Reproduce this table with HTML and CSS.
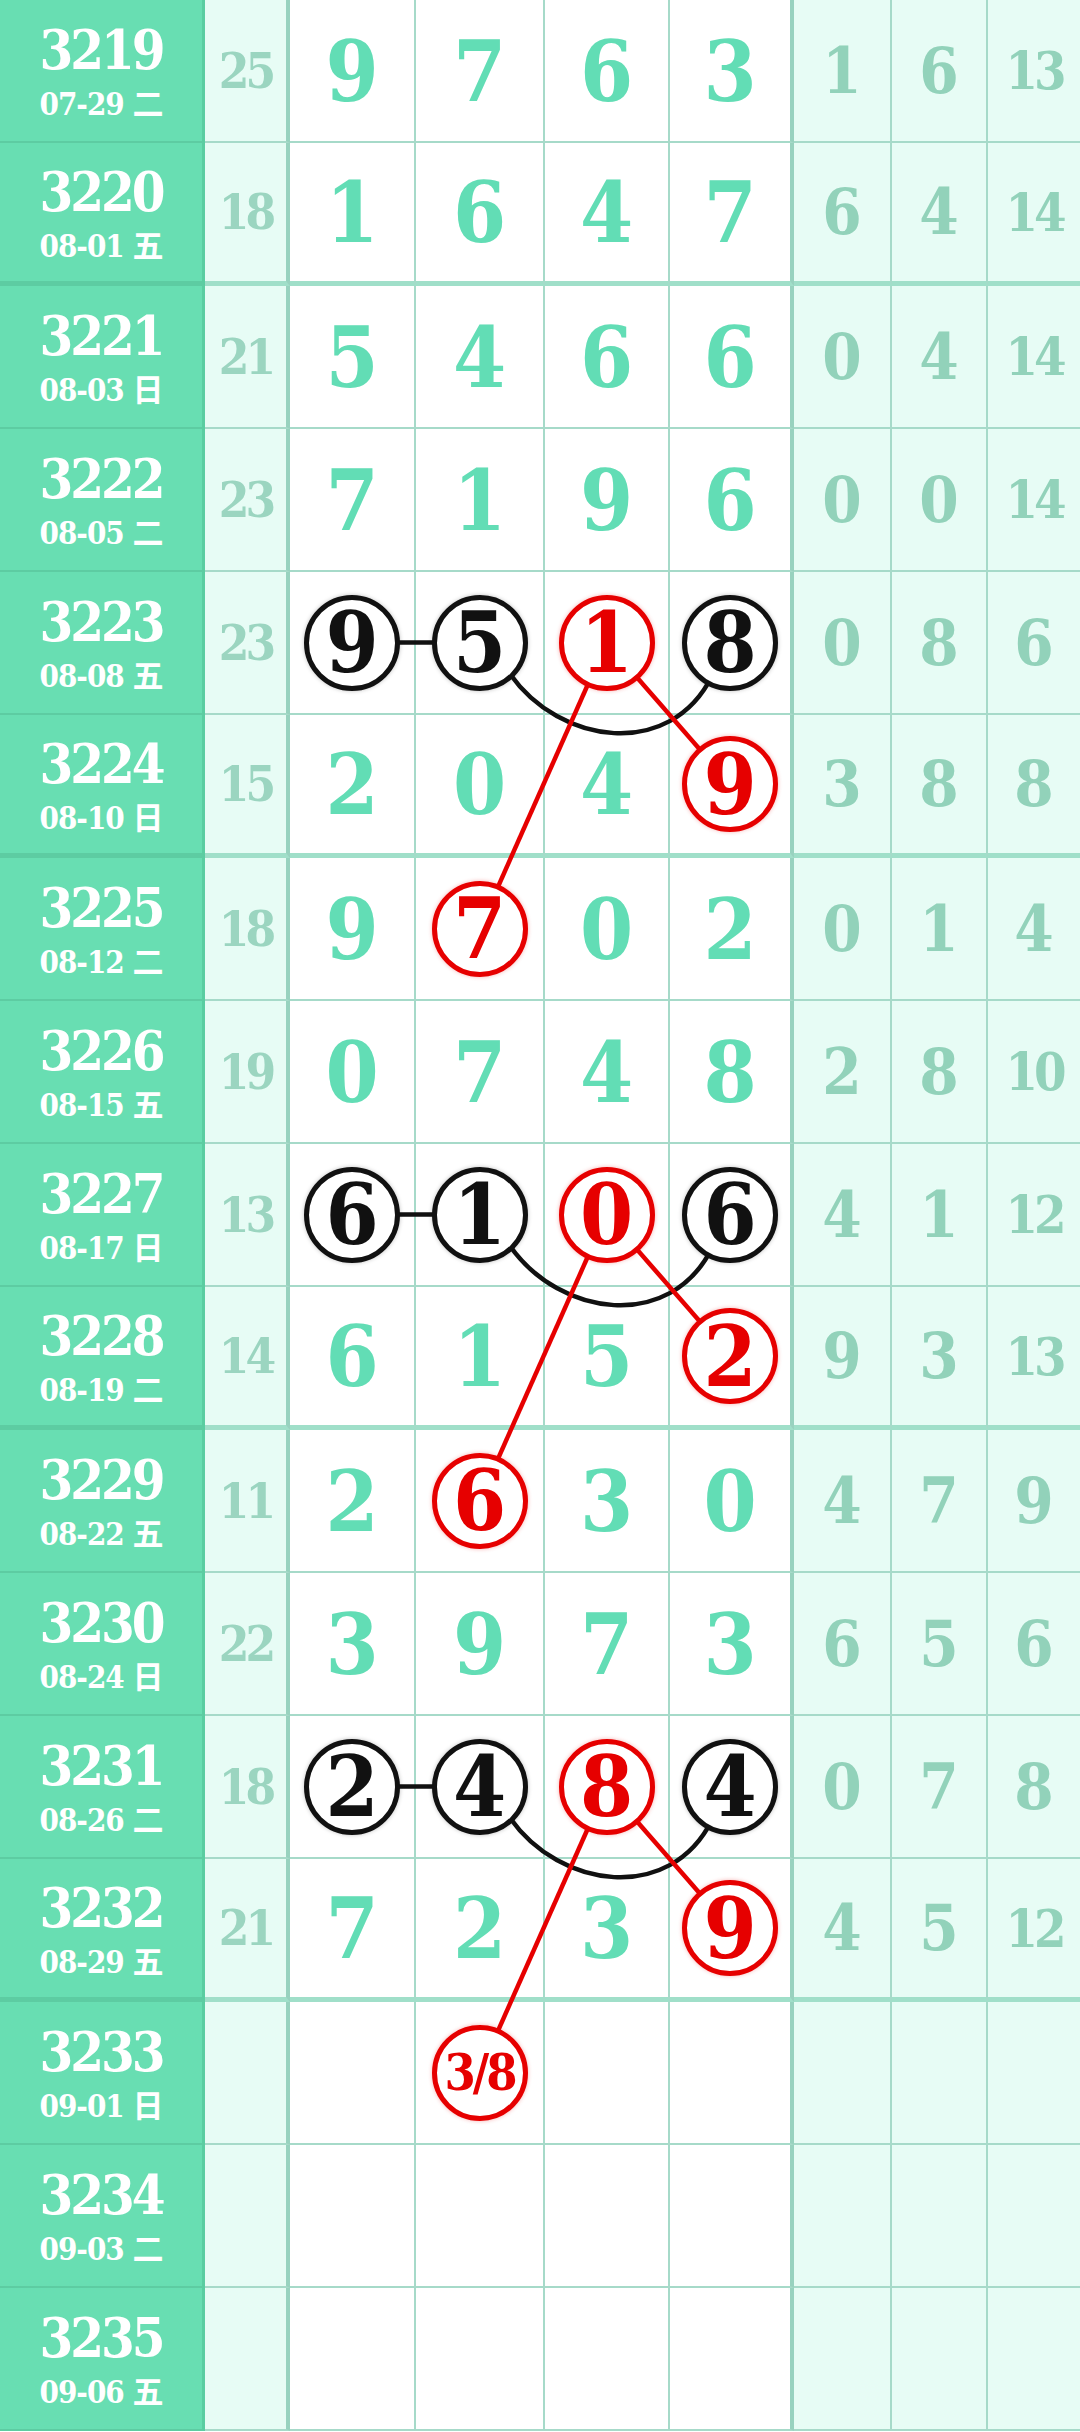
FILE: index.html
```html
<!DOCTYPE html>
<html>
<head>
  <title>走势图</title>
  <meta name="viewport" content="width=device-width, initial-scale=1.0">
  <link rel="stylesheet" href="styles.css">
</head>
<body>

  <div class="board">

    <div class="row">
      <div class="issue"><b>3219</b><span>07-29 二</span></div>
      <div class="sum">25</div>
      <div class="num">9</div><div class="num">7</div><div class="num">6</div><div class="num last">3</div>
      <div class="stat">1</div><div class="stat">6</div><div class="stat last two">13</div>
    </div>

    <div class="row sep">
      <div class="issue"><b>3220</b><span>08-01 五</span></div>
      <div class="sum">18</div>
      <div class="num">1</div><div class="num">6</div><div class="num">4</div><div class="num last">7</div>
      <div class="stat">6</div><div class="stat">4</div><div class="stat last two">14</div>
    </div>

    <div class="row">
      <div class="issue"><b>3221</b><span>08-03 日</span></div>
      <div class="sum">21</div>
      <div class="num">5</div><div class="num">4</div><div class="num">6</div><div class="num last">6</div>
      <div class="stat">0</div><div class="stat">4</div><div class="stat last two">14</div>
    </div>

    <div class="row">
      <div class="issue"><b>3222</b><span>08-05 二</span></div>
      <div class="sum">23</div>
      <div class="num">7</div><div class="num">1</div><div class="num">9</div><div class="num last">6</div>
      <div class="stat">0</div><div class="stat">0</div><div class="stat last two">14</div>
    </div>

    <div class="row">
      <div class="issue"><b>3223</b><span>08-08 五</span></div>
      <div class="sum">23</div>
      <div class="num"><span class="ring">9</span></div>
      <div class="num"><span class="ring">5</span></div>
      <div class="num"><span class="ring red">1</span></div>
      <div class="num last"><span class="ring">8</span></div>
      <div class="stat">0</div><div class="stat">8</div><div class="stat last">6</div>
    </div>

    <div class="row sep">
      <div class="issue"><b>3224</b><span>08-10 日</span></div>
      <div class="sum">15</div>
      <div class="num">2</div><div class="num">0</div><div class="num">4</div>
      <div class="num last"><span class="ring red">9</span></div>
      <div class="stat">3</div><div class="stat">8</div><div class="stat last">8</div>
    </div>

    <div class="row">
      <div class="issue"><b>3225</b><span>08-12 二</span></div>
      <div class="sum">18</div>
      <div class="num">9</div>
      <div class="num"><span class="ring red">7</span></div>
      <div class="num">0</div><div class="num last">2</div>
      <div class="stat">0</div><div class="stat">1</div><div class="stat last">4</div>
    </div>

    <div class="row">
      <div class="issue"><b>3226</b><span>08-15 五</span></div>
      <div class="sum">19</div>
      <div class="num">0</div><div class="num">7</div><div class="num">4</div><div class="num last">8</div>
      <div class="stat">2</div><div class="stat">8</div><div class="stat last two">10</div>
    </div>

    <div class="row">
      <div class="issue"><b>3227</b><span>08-17 日</span></div>
      <div class="sum">13</div>
      <div class="num"><span class="ring">6</span></div>
      <div class="num"><span class="ring">1</span></div>
      <div class="num"><span class="ring red">0</span></div>
      <div class="num last"><span class="ring">6</span></div>
      <div class="stat">4</div><div class="stat">1</div><div class="stat last two">12</div>
    </div>

    <div class="row sep">
      <div class="issue"><b>3228</b><span>08-19 二</span></div>
      <div class="sum">14</div>
      <div class="num">6</div><div class="num">1</div><div class="num">5</div>
      <div class="num last"><span class="ring red">2</span></div>
      <div class="stat">9</div><div class="stat">3</div><div class="stat last two">13</div>
    </div>

    <div class="row">
      <div class="issue"><b>3229</b><span>08-22 五</span></div>
      <div class="sum">11</div>
      <div class="num">2</div>
      <div class="num"><span class="ring red">6</span></div>
      <div class="num">3</div><div class="num last">0</div>
      <div class="stat">4</div><div class="stat">7</div><div class="stat last">9</div>
    </div>

    <div class="row">
      <div class="issue"><b>3230</b><span>08-24 日</span></div>
      <div class="sum">22</div>
      <div class="num">3</div><div class="num">9</div><div class="num">7</div><div class="num last">3</div>
      <div class="stat">6</div><div class="stat">5</div><div class="stat last">6</div>
    </div>

    <div class="row">
      <div class="issue"><b>3231</b><span>08-26 二</span></div>
      <div class="sum">18</div>
      <div class="num"><span class="ring">2</span></div>
      <div class="num"><span class="ring">4</span></div>
      <div class="num"><span class="ring red">8</span></div>
      <div class="num last"><span class="ring">4</span></div>
      <div class="stat">0</div><div class="stat">7</div><div class="stat last">8</div>
    </div>

    <div class="row sep">
      <div class="issue"><b>3232</b><span>08-29 五</span></div>
      <div class="sum">21</div>
      <div class="num">7</div><div class="num">2</div><div class="num">3</div>
      <div class="num last"><span class="ring red">9</span></div>
      <div class="stat">4</div><div class="stat">5</div><div class="stat last two">12</div>
    </div>

    <div class="row">
      <div class="issue"><b>3233</b><span>09-01 日</span></div>
      <div class="sum"></div>
      <div class="num"></div>
      <div class="num"><span class="ring red guess">3/8</span></div>
      <div class="num"></div><div class="num last"></div>
      <div class="stat"></div><div class="stat"></div><div class="stat last"></div>
    </div>

    <div class="row">
      <div class="issue"><b>3234</b><span>09-03 二</span></div>
      <div class="sum"></div>
      <div class="num"></div><div class="num"></div><div class="num"></div><div class="num last"></div>
      <div class="stat"></div><div class="stat"></div><div class="stat last"></div>
    </div>

    <div class="row">
      <div class="issue"><b>3235</b><span>09-06 五</span></div>
      <div class="sum"></div>
      <div class="num"></div><div class="num"></div><div class="num"></div><div class="num last"></div>
      <div class="stat"></div><div class="stat"></div><div class="stat last"></div>
    </div>

    <!-- lines between the ringed numbers -->
    <svg class="links" width="1080" height="2432" viewBox="0 0 1080 2432">
      <defs>
        <g id="fork">
          <line x1="352" y1="642.5" x2="479.5" y2="642.5" stroke="#111" stroke-width="4.5"/>
          <path d="M510 674 C560 745 670 760 712 676" fill="none" stroke="#111" stroke-width="4.5"/>
          <line x1="606.5" y1="642.5" x2="479.5" y2="928.5" stroke="#e60000" stroke-width="4.5"/>
          <line x1="606.5" y1="642.5" x2="730" y2="784" stroke="#e60000" stroke-width="4.5"/>
        </g>
      </defs>
      <use href="#fork"/>
      <use href="#fork" y="572"/>
      <use href="#fork" y="1144"/>
    </svg>

  </div>

</body>
</html>
```

FILE: styles.css
```css
body {
  margin: 0;
  background-color: #fff;
  font-family: "DejaVu Serif", "Noto Sans CJK SC", serif;
  font-weight: bold;
  font-stretch: condensed;
}

.board {
  position: relative;
  width: 1080px;
  display: flex;
  flex-direction: column;
}

.row {
  display: grid;
  grid-template-columns: 205px 85px 126px 129px 125px 124px 98px 96px 92px;
  height: 143px;
}

.row > div {
  box-sizing: border-box;
  display: flex;
  align-items: center;
  justify-content: center;
  border-right: 2px solid #a6dac9;
  border-bottom: 2px solid #a6dac9;
}

.row.sep > div {
  border-bottom: 5px solid #a0dfc9;
}

/* issue column */
.row > .issue {
  flex-direction: column;
  background-color: #68deb2;
  color: #fff;
  border-right: 3px solid #5acda1;
  border-bottom-color: #5dcca2;
}

.row.sep > .issue {
  border-bottom-color: #5dcca2;
}

.issue b {
  font-size: 54px;
  line-height: 54px;
  letter-spacing: -3px;
  margin-top: 2px;
}

.issue span {
  font-size: 31px;
  line-height: 31px;
  letter-spacing: -1px;
  margin-top: 12px;
}

.row > .sum {
  background-color: #e7fcf5;
  color: #9bd5c0;
  font-size: 49px;
  letter-spacing: -4px;
  border-right: 4px solid #98d2bf;
}

.row > .num {
  background-color: #fff;
  color: #62ddb5;
  font-size: 85px;
}

.row > .num.last {
  border-right: 4px solid #98d2bf;
}

.row > .stat {
  background-color: #e7fcf5;
  color: #92d2ba;
  font-size: 63px;
}

.row > .stat.two {
  font-size: 52px;
  letter-spacing: -4px;
}

.row > .stat.last {
  border-right: none;
}

/* ringed numbers */
.ring {
  position: relative;
  z-index: 2;
  box-sizing: border-box;
  width: 96px;
  height: 96px;
  border: 5px solid #111;
  border-radius: 50%;
  background-color: #fff;
  color: #111;
  display: flex;
  align-items: center;
  justify-content: center;
  line-height: 1;
  box-shadow: 0 0 4px rgba(0, 0, 0, 0.25);
}

.ring.red {
  border-color: #e60000;
  color: #e60000;
  box-shadow: 0 0 4px rgba(230, 0, 0, 0.3);
}

.ring.guess {
  font-size: 50px;
  letter-spacing: -3px;
}

.links {
  position: absolute;
  top: 0;
  left: 0;
  z-index: 1;
  pointer-events: none;
}
```
